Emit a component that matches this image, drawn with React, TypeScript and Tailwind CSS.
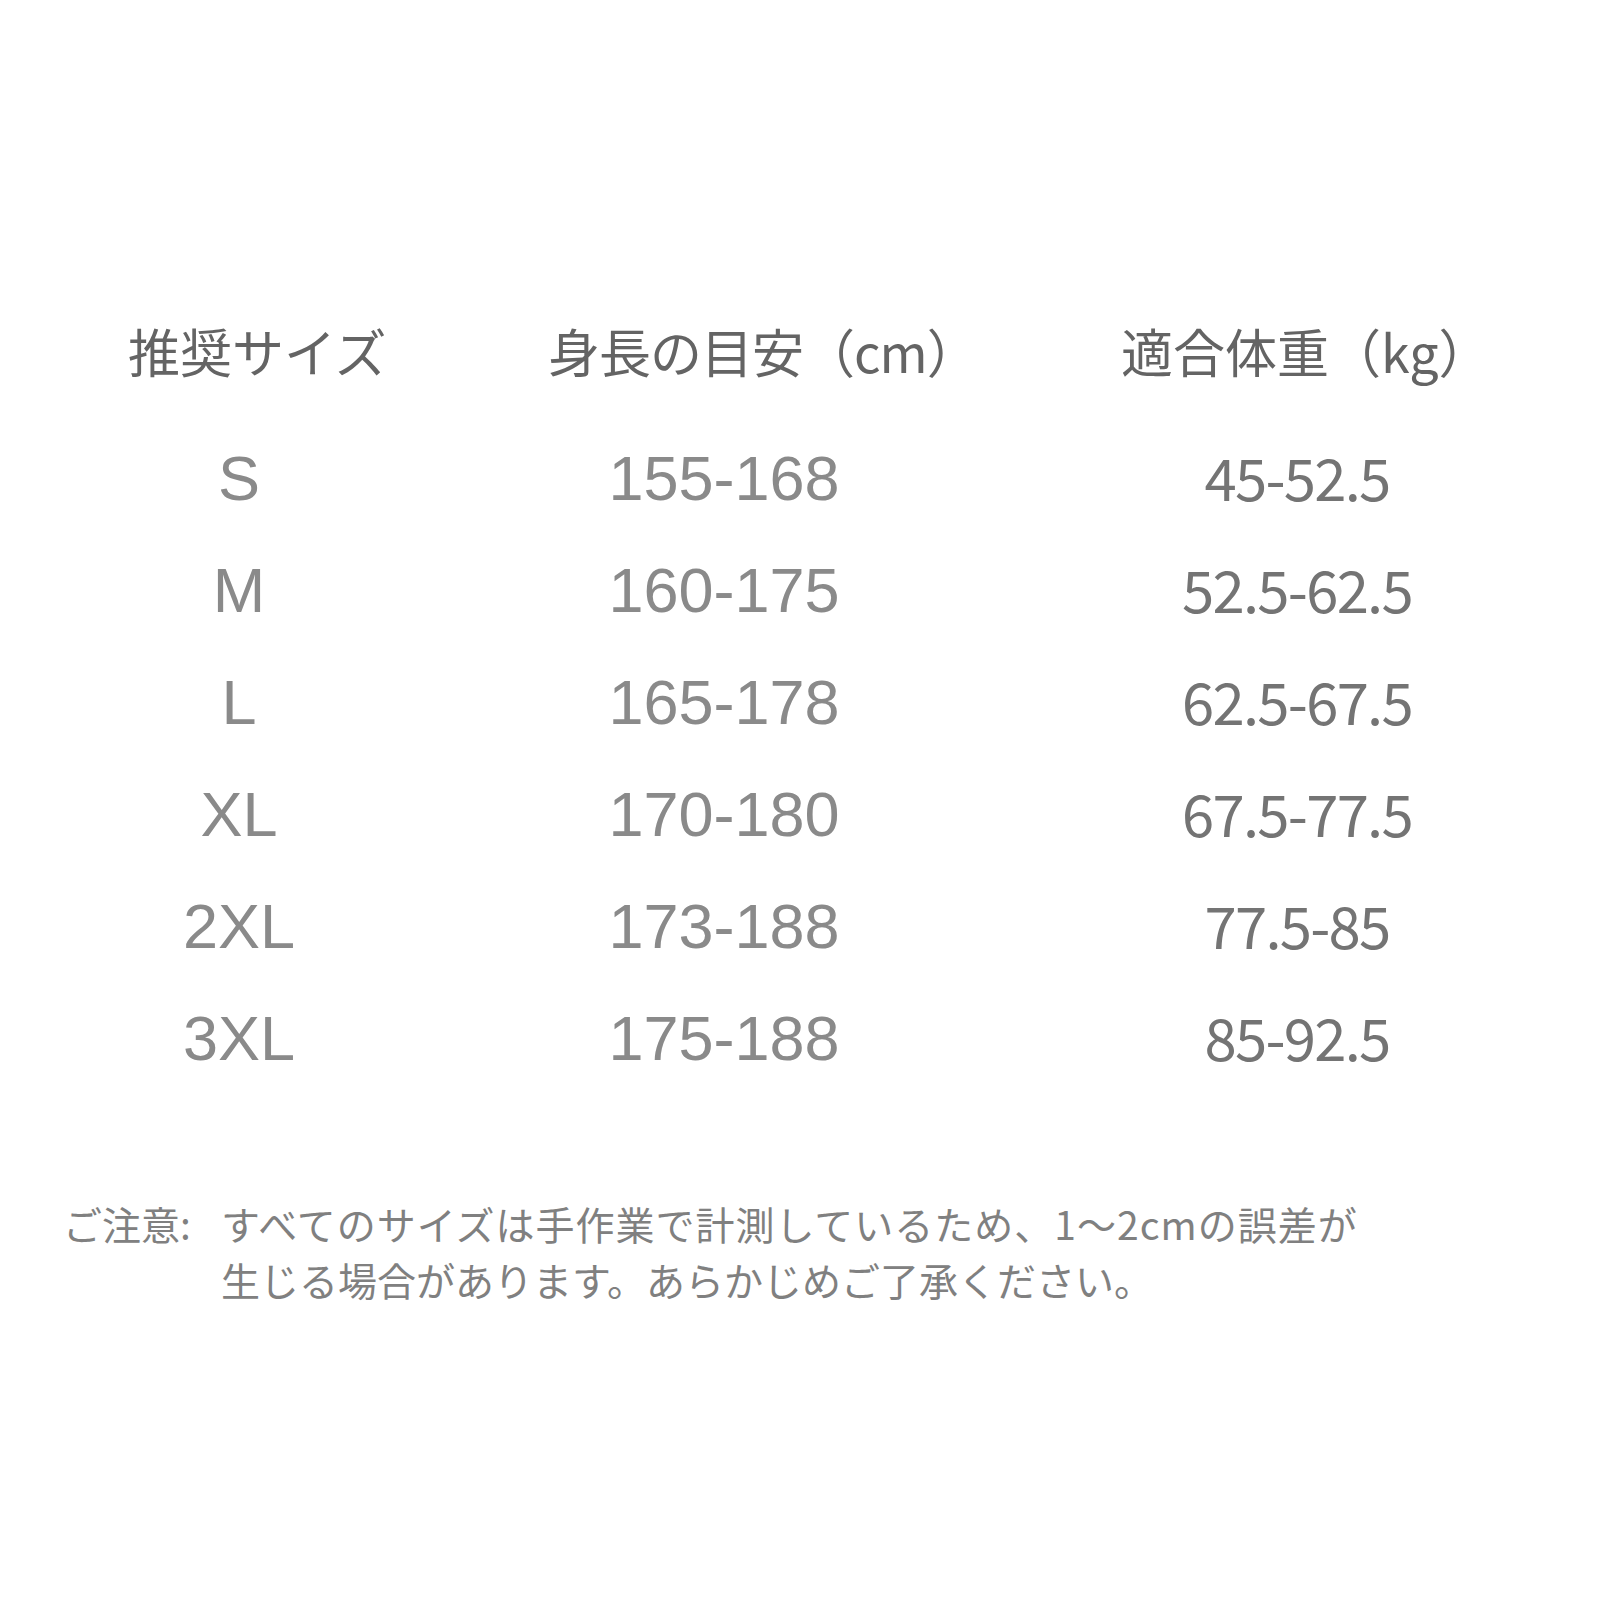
import React from "react";

const rows = [
  ["S", "155-168", "45-52.5"],
  ["M", "160-175", "52.5-62.5"],
  ["L", "165-178", "62.5-67.5"],
  ["XL", "170-180", "67.5-77.5"],
  ["2XL", "173-188", "77.5-85"],
  ["3XL", "175-188", "85-92.5"],
];

const cjk = { fontFamily: '"Noto Sans CJK JP", "Noto Sans", sans-serif' };
const arial = { fontFamily: '"Liberation Sans", Arial, sans-serif' };

export default function App() {
  return (
    <div className="w-[1600px] h-[1600px] bg-white overflow-hidden pt-[325px]">
      <div className="flex text-[52px] leading-[52px] text-[#646464]" style={cjk}>
        <div className="ml-[128px] w-[420px] whitespace-nowrap">推奨サイズ</div>
        <div className="w-[573px] whitespace-nowrap tracking-[-1px]">身長の目安（cm）</div>
        <div className="whitespace-nowrap">適合体重（kg）</div>
      </div>
      <div className="mt-[45px] flex flex-col">
        {rows.map((r) => (
          <div key={r[0]} className="flex h-[112px] items-center">
            <div className="w-[478px] text-center text-[63px] leading-[63px] text-[#8a8a8a]" style={arial}>
              {r[0]}
            </div>
            <div className="w-[492px] text-center text-[63px] leading-[63px] text-[#8a8a8a]" style={arial}>
              {r[1]}
            </div>
            <div className="ml-[130px] w-[394px] -mt-[4px] text-center text-[58px] leading-[58px] tracking-[-0.03em] text-[#747474]" style={cjk}>
              {r[2]}
            </div>
          </div>
        ))}
      </div>
      <div className="mt-[101px] flex text-[39px] leading-[56px] text-[#808080]" style={cjk}>
        <div className="ml-[63px] w-[158px] whitespace-nowrap">ご注意:</div>
        <div className="flex flex-col">
          <div className="whitespace-nowrap tracking-[1px]">すべてのサイズは手作業で計測しているため、1～2cmの誤差が</div>
          <div className="whitespace-nowrap">生じる場合があります。あらかじめご了承ください。</div>
        </div>
      </div>
    </div>
  );
}
